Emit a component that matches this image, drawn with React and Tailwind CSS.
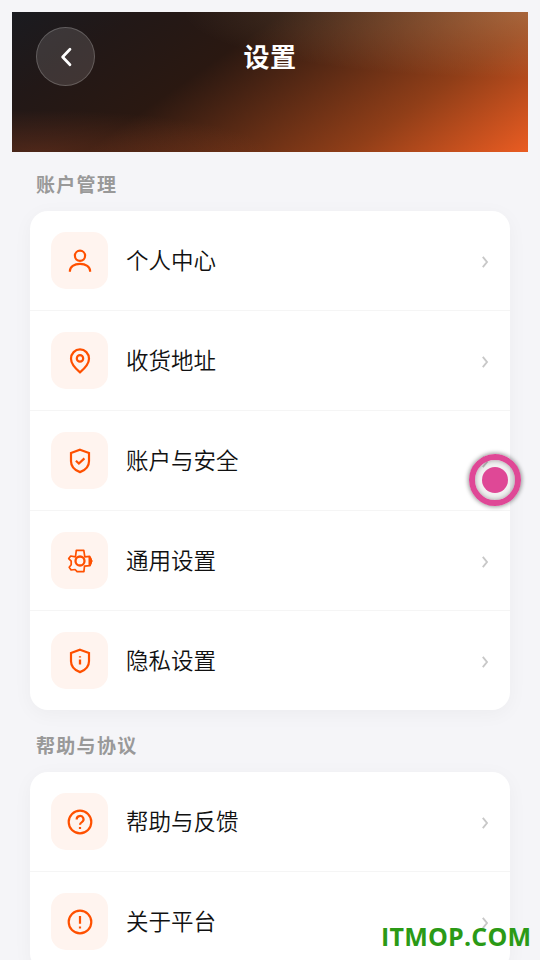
import React from 'react';

const UserIcon = () => (
  <>
    <circle cx="20" cy="15.800" r="5.100" />
    <path d="M9.900 31.800v-.8c0-4.200 4.200-7.100 10.100-7.100s10.100 2.900 10.100 7.100v.8" />
  </>
);

const PinIcon = () => (
  <>
    <path d="M20 32.300c-4.500-3.800-9-8.400-9-13.600a9 9.300 0 0 1 18 0c0 5.200-4.500 9.800-9 13.600z" />
    <circle cx="20" cy="18.400" r="3.200" />
  </>
);

const Shield = () => (
  <path d="M20 9.700l9 3.300v8.200c0 5.200-3.800 9-9 10.900-5.200-1.900-9-5.700-9-10.900V13z" />
);

const ShieldCheckIcon = () => (
  <>
    <Shield />
    <path d="M15.900 20.700l3 2.900 5.500-5.200" />
  </>
);

const ShieldInfoIcon = () => (
  <>
    <Shield />
    <path d="M20 19.400v5" strokeWidth="2.300" />
    <path d="M20 16.300v1.200" />
  </>
);

const GearIcon = () => (
  <>
    <path
      strokeWidth="1.700"
      strokeLinejoin="round"
      d="M16.300 10.400h7.500l1 6.400 4.800-.4 2 4.600-1.800 4.600-5.300.5-.6 5.500h-6.800l-2-2.100-4 .5-1.900-2.800 2-2.500v-3.600l-2.500-2.500 2-2.600 4.800.8z"
    />
    <circle cx="20" cy="21" r="4.500" strokeWidth="2.300" />
    <path strokeWidth="1" fill="currentColor" d="M29 17h1.400l1.600 4-1.600 4.500H29z" />
  </>
);

const HelpIcon = () => (
  <>
    <circle cx="20" cy="21" r="11.300" />
    <path d="M16.700 18.500a3.400 3.300 0 1 1 5.200 2.600c-1.300.8-1.900 1.400-1.900 2.600" />
    <path d="M20 26v2" />
  </>
);

const AboutIcon = () => (
  <>
    <circle cx="20" cy="21" r="11.300" />
    <path d="M20 15v7.800" />
    <path d="M20 25.400v2" />
  </>
);

const sections = [
  {
    title: '账户管理',
    items: [
      { label: '个人中心', icon: UserIcon },
      { label: '收货地址', icon: PinIcon },
      { label: '账户与安全', icon: ShieldCheckIcon },
      { label: '通用设置', icon: GearIcon },
      { label: '隐私设置', icon: ShieldInfoIcon }
    ]
  },
  {
    title: '帮助与协议',
    items: [
      { label: '帮助与反馈', icon: HelpIcon },
      { label: '关于平台', icon: AboutIcon }
    ]
  }
];

const Header = () => (
  <header className="mx-3 grid h-[140px] grid-cols-[59px_1fr_59px] items-start bg-[radial-gradient(ellipse_345px_66px_at_100%_0%,rgba(255,215,155,0.27),rgba(255,215,155,0)),radial-gradient(ellipse_230px_42px_at_5%_100%,rgba(255,107,53,0.18),rgba(255,107,53,0)),linear-gradient(145deg,#1a1b20_0%,#221817_18%,#2a1811_38%,#903e18_75%,#ea5c22_100%)] px-6 pt-[15px]">
    <button className="flex h-[59px] w-[59px] items-center justify-center rounded-full border border-white/20 bg-white/[0.13] text-white">
      <svg width="20" height="20" viewBox="0 0 20 20" fill="none" stroke="currentColor" strokeWidth="2.700" strokeLinecap="round" strokeLinejoin="round">
        <path d="M14 2.200L6.600 10l7.400 7.800" />
      </svg>
    </button>
    <h1 className="pt-[10px] text-center text-[26px] leading-[38px] font-bold tracking-[0.500px] text-white">设置</h1>
  </header>
);

const SettingRow = ({ item }) => {
  const Icon = item.icon;
  return (
    <div className="flex h-[100px] items-center border-b border-[#f5f5f5] pr-5 pl-[21px] last:h-[99px] last:border-b-0">
      <div className="flex h-[57px] w-[57px] items-center justify-center rounded-[15px] bg-[#fff4ef] text-[#ff5000]">
        <svg className="-mt-px" width="40" height="40" viewBox="0 0 40 40" fill="none" stroke="currentColor" strokeWidth="2.200">
          <Icon />
        </svg>
      </div>
      <span className="mb-[3px] ml-[18px] flex-1 text-[22.500px] leading-8 font-[350] text-[#111111]">{item.label}</span>
      <svg className="mt-[3px]" width="10" height="14" viewBox="0 0 10 14" fill="none" stroke="#c8c8c8" strokeWidth="1.900">
        <path d="M2.800 1.800L7 7l-4.200 5.200" />
      </svg>
    </div>
  );
};

const App = () => {
  return (
    <div className="relative h-[960px] w-[540px] overflow-hidden bg-[#f5f5f8] pt-3 font-['Noto_Sans_CJK_SC',sans-serif]">
      <Header />

      {sections.map((section) => (
        <section key={section.title} className="px-[30px]">
          <h2 className="flex h-[59px] items-center pt-1.5 pl-1.5 text-[19px] tracking-[1.300px] font-bold text-[#999999]">{section.title}</h2>
          <div className="mb-[3px] overflow-hidden rounded-[18px] bg-white shadow-[0_4px_20px_rgba(0,0,0,0.04)]">
            {section.items.map((item) => (
              <SettingRow key={item.label} item={item} />
            ))}
          </div>
        </section>
      ))}

      {/* Floating assist button */}
      <div className="absolute top-[454px] left-[469px] flex h-[52px] w-[52px] items-center justify-center rounded-full border-[6px] border-[#df4896] bg-black/5 shadow-[0_0_4px_1px_rgba(0,0,0,0.4),inset_0_0_5px_rgba(0,0,0,0.35)]">
        <div className="h-[26px] w-[26px] shrink-0 rounded-full bg-[#df4896]" />
      </div>

      {/* Watermark */}
      <div className="absolute top-[918px] left-[381px] font-['Open_Sans',sans-serif] text-[25px] leading-9 font-bold tracking-[0.200px] whitespace-nowrap text-[#2b9a16]">ITMOP.COM</div>
    </div>
  );
};

export default App;
